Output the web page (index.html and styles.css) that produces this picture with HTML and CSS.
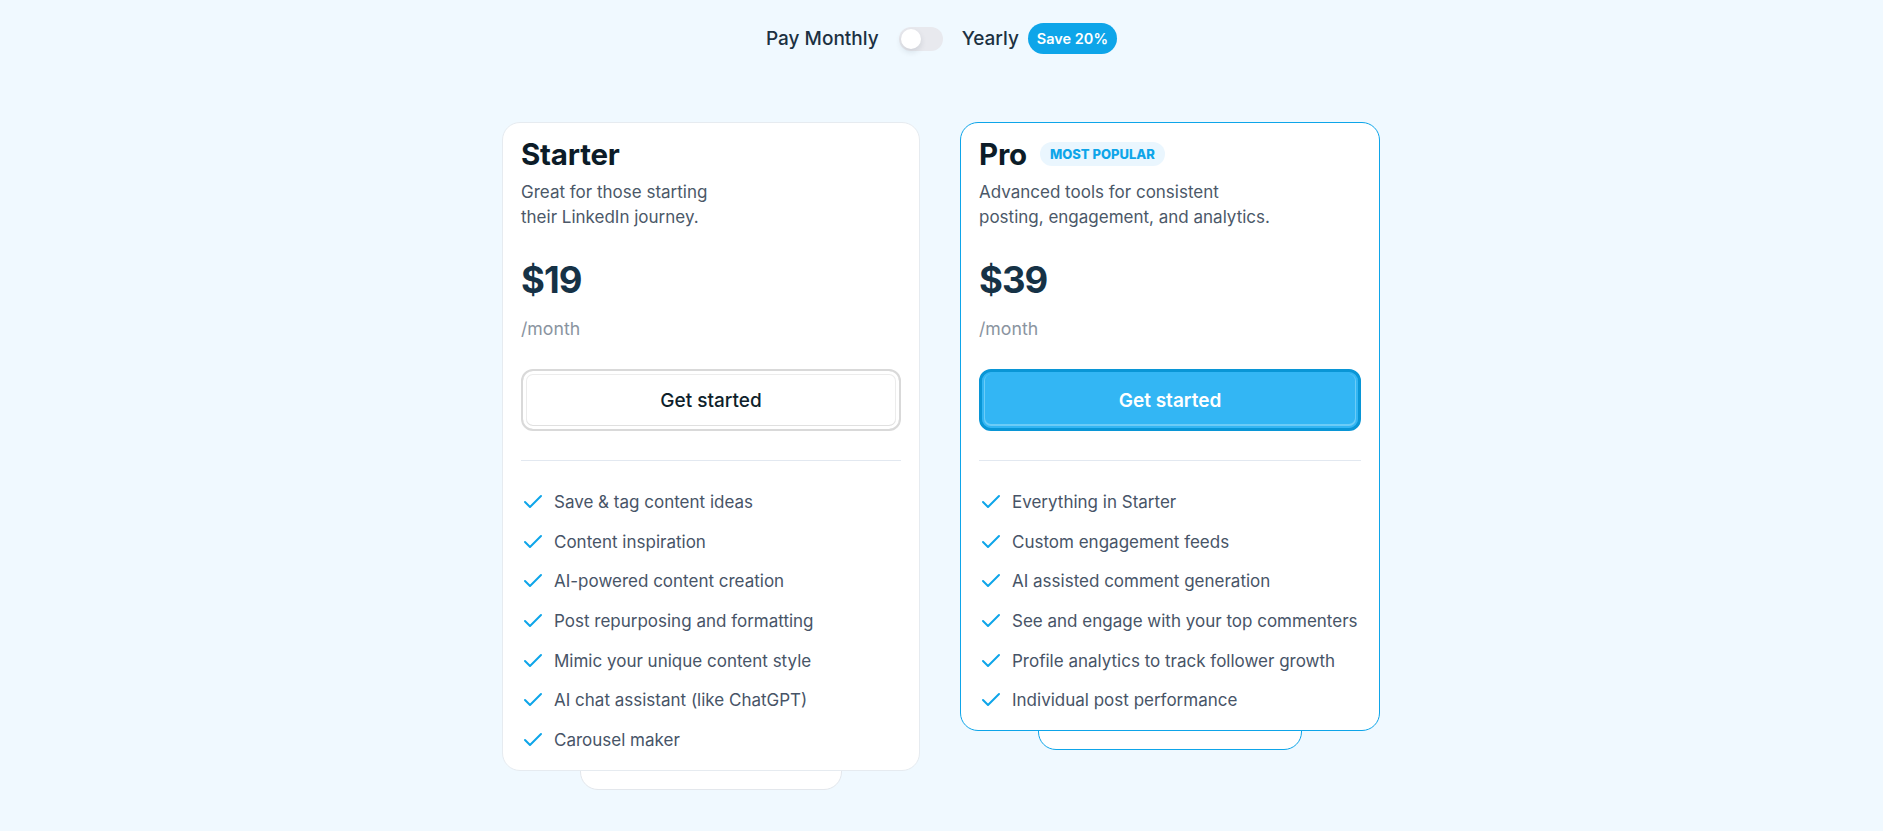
FILE: index.html
```html
<!DOCTYPE html>
<html lang="en">
<head>
<meta charset="utf-8">
<title>Pricing</title>
<link rel="stylesheet" href="styles.css">
</head>
<body>
<main class="page">
  <div class="billing">
    <span class="billing-label">Pay Monthly</span>
    <span class="switch" role="switch" aria-checked="false"><span class="knob"></span></span>
    <span class="billing-label">Yearly</span>
    <span class="save-badge">Save 20%</span>
  </div>

  <section class="plans">
    <article class="plan">
      <div class="plan-head">
        <h2 class="plan-name">Starter</h2>
      </div>
      <p class="plan-desc">Great for those starting<br>their LinkedIn journey.</p>
      <div class="price">$19</div>
      <div class="period">/month</div>
      <button class="btn btn-outline">Get started</button>
      <hr class="divider">
      <ul class="features">
        <li><svg class="check" viewBox="0 0 24 24"><path d="M20 6 9 17l-5-5"/></svg>Save &amp; tag content ideas</li>
        <li><svg class="check" viewBox="0 0 24 24"><path d="M20 6 9 17l-5-5"/></svg>Content inspiration</li>
        <li><svg class="check" viewBox="0 0 24 24"><path d="M20 6 9 17l-5-5"/></svg>AI-powered content creation</li>
        <li><svg class="check" viewBox="0 0 24 24"><path d="M20 6 9 17l-5-5"/></svg>Post repurposing and formatting</li>
        <li><svg class="check" viewBox="0 0 24 24"><path d="M20 6 9 17l-5-5"/></svg>Mimic your unique content style</li>
        <li><svg class="check" viewBox="0 0 24 24"><path d="M20 6 9 17l-5-5"/></svg>AI chat assistant (like ChatGPT)</li>
        <li><svg class="check" viewBox="0 0 24 24"><path d="M20 6 9 17l-5-5"/></svg>Carousel maker</li>
      </ul>
    </article>

    <article class="plan plan-pro">
      <div class="plan-head">
        <h2 class="plan-name">Pro</h2>
        <span class="popular">MOST POPULAR</span>
      </div>
      <p class="plan-desc">Advanced tools for consistent<br>posting, engagement, and analytics.</p>
      <div class="price">$39</div>
      <div class="period">/month</div>
      <button class="btn btn-primary">Get started</button>
      <hr class="divider">
      <ul class="features">
        <li><svg class="check" viewBox="0 0 24 24"><path d="M20 6 9 17l-5-5"/></svg>Everything in Starter</li>
        <li><svg class="check" viewBox="0 0 24 24"><path d="M20 6 9 17l-5-5"/></svg>Custom engagement feeds</li>
        <li><svg class="check" viewBox="0 0 24 24"><path d="M20 6 9 17l-5-5"/></svg>AI assisted comment generation</li>
        <li><svg class="check" viewBox="0 0 24 24"><path d="M20 6 9 17l-5-5"/></svg>See and engage with your top commenters</li>
        <li><svg class="check" viewBox="0 0 24 24"><path d="M20 6 9 17l-5-5"/></svg>Profile analytics to track follower growth</li>
        <li><svg class="check" viewBox="0 0 24 24"><path d="M20 6 9 17l-5-5"/></svg>Individual post performance</li>
      </ul>
    </article>
  </section>
</main>
</body>
</html>
```

FILE: styles.css
```css
* { box-sizing: border-box; }

html, body {
  margin: 0;
  padding: 0;
}

body {
  background: #f0f9ff;
  font-family: Inter, "Noto Sans", "Liberation Sans", sans-serif;
  color: #0f1f2b;
  min-height: 831px;
}

.page {
  padding-top: 23px;
}

.billing {
  display: flex;
  justify-content: center;
  align-items: center;
  height: 31px;
}

.billing-label {
  font-size: 19px;
  font-weight: 500;
  color: #1c3142;
}

.switch {
  width: 44px;
  height: 24px;
  border-radius: 12px;
  background: #e8e9ee;
  margin: 0 19px 0 20px;
  padding: 2px;
  display: flex;
  align-items: center;
}

.knob {
  width: 20px;
  height: 20px;
  border-radius: 50%;
  background: #fff;
  box-shadow: 0 3px 6px rgba(15, 30, 50, 0.12);
}

.save-badge {
  margin-left: 9px;
  height: 31px;
  padding: 0 9px;
  border-radius: 16px;
  background: #0ea5e9;
  color: #fff;
  font-size: 14.5px;
  font-weight: 600;
  display: flex;
  align-items: center;
}

.plans {
  display: flex;
  justify-content: center;
  align-items: flex-start;
  gap: 40px;
  margin-top: 68px;
  padding-right: 1px;
}

.plan {
  position: relative;
  width: 418px;
  background: #fff;
  border: 1px solid #e6ebf0;
  border-radius: 18px;
  padding: 14px 18px 18px;
}

.plan::after {
  content: "";
  position: absolute;
  left: 77px;
  right: 77px;
  bottom: -20px;
  height: 40px;
  background: #fff;
  border: 1px solid #e3e7ec;
  border-radius: 0 0 18px 18px;
  z-index: -1;
}

.plan-pro {
  width: 420px;
  border-color: #0ea5e9;
}

.plan-pro::after {
  border-color: #0ea5e9;
}

.plan-head {
  display: flex;
  align-items: center;
  height: 34px;
}

.plan-name {
  margin: 0;
  font-size: 29.5px;
  line-height: 34px;
  font-weight: 700;
  color: #0c1c28;
  letter-spacing: -0.2px;
}

.popular {
  margin-left: 13px;
  height: 24px;
  padding: 0 10px;
  border-radius: 12px;
  background: #eaf6fe;
  color: #0ea5e9;
  font-size: 13px;
  font-weight: 800;
  display: flex;
  align-items: center;
}

.plan-desc {
  margin: 9px 0 0;
  font-size: 17px;
  line-height: 25px;
  color: #4b5868;
}

.price {
  margin-top: 30px;
  font-size: 36.5px;
  line-height: 40px;
  font-weight: 700;
  color: #163246;
  letter-spacing: -1px;
}

.period {
  margin-top: 17px;
  font-size: 17.7px;
  line-height: 24px;
  color: #8a949f;
}

.btn {
  display: block;
  width: 100%;
  height: 62px;
  margin-top: 28px;
  border-radius: 12px;
  font-family: inherit;
  font-size: 19px;
  cursor: pointer;
}

.btn-outline {
  background: #fff;
  color: #0f1f2b;
  font-weight: 500;
  border: 2px solid #d9d9d9;
  box-shadow: inset 0 0 0 3px #fff, inset 0 -1px 0 3px #e0e0e0, inset 0 0 0 4px #ececec;
}

.btn-primary {
  background: #33b6f4;
  color: #fff;
  font-weight: 600;
  border: 3px solid #0996d6;
  box-shadow: inset 0 0 0 2px #33b6f4, inset 0 -1px 0 3px #6cccf7;
}

.divider {
  margin: 29px 0 0;
  border: 0;
  border-top: 1px solid #e2e8f0;
}

.features {
  list-style: none;
  margin: 29px 0 0;
  padding: 0;
  display: flex;
  flex-direction: column;
  gap: 15.7px;
}

.features li {
  display: flex;
  align-items: center;
  height: 24px;
  font-size: 17px;
  line-height: 24px;
  color: #475467;
}

.check {
  width: 24px;
  height: 24px;
  margin-right: 9px;
  flex: none;
  fill: none;
  stroke: #0ea5e9;
  stroke-width: 2;
  stroke-linecap: round;
  stroke-linejoin: round;
}
```
